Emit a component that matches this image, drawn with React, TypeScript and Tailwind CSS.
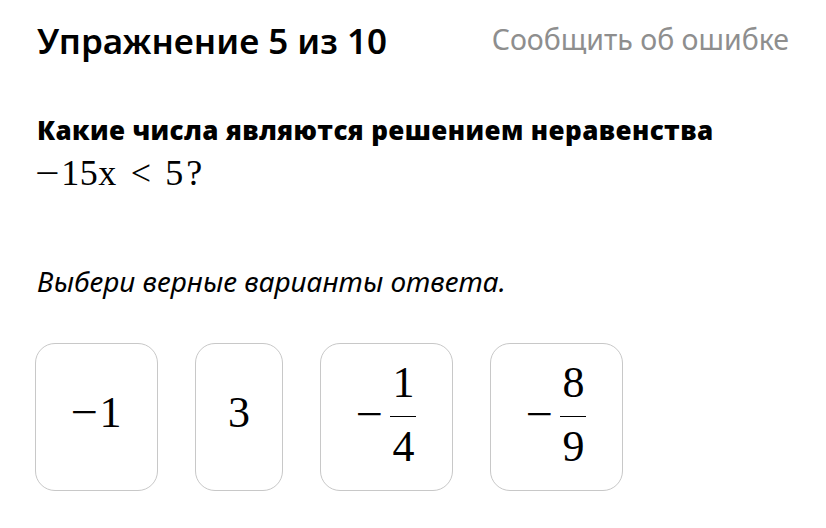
import React from "react";

const serif = { fontFamily: '"Liberation Serif", "DejaVu Serif", serif' };

function Frac({ n, d }: { n: string; d: string }) {
  return (
    <span className="inline-flex flex-col items-center leading-none">
      <span className="px-[2px] pb-[11px]">{n}</span>
      <span className="h-[1.5px] w-full bg-black" />
      <span className="px-[2px] pt-[8px]">{d}</span>
    </span>
  );
}

export default function App() {
  return (
    <div className="w-[826px] h-[528px] bg-white text-black px-[37px] pt-[17px]" style={{ fontFamily: '"Noto Sans", "Open Sans", sans-serif' }}>
      <div className="flex items-start justify-between">
        <div className="text-[35px] leading-[48px] font-semibold">Упражнение 5 из 10</div>
        <div className="text-[28.5px] leading-[48px] text-[#8e8e8e] mt-[-2px]">Сообщить об ошибке</div>
      </div>
      <div className="mt-[49px] text-[26px] font-extrabold leading-[32px] tracking-[0.4px]" style={{ fontFamily: '"Open Sans", "Noto Sans", sans-serif' }}>
        Какие числа являются решением неравенства
      </div>
      <div className="mt-[7px] text-[36px] leading-[40px] flex items-baseline" style={serif}>
        <span className="mr-[4px] scale-x-[1.2] inline-block">−</span>
        <span className="tracking-[0.5px]">15x</span>
        <span className="ml-[14px] mr-[14px]">&lt;</span>
        <span className="tracking-[3px]">5?</span>
      </div>
      <div className="mt-[70px] text-[28px] italic leading-[36px]">Выбери верные варианты ответа.</div>
      <div className="mt-[44px] ml-[-2px] flex gap-[37px] text-[44px]" style={serif}>
        <div className="h-[148px] w-[123px] rounded-[20px] border-[1.5px] border-[#c8c8c8] flex items-center justify-center pb-[8px]">
          <span className="leading-none inline-block scale-x-[1.1] mr-[3px]">−</span>
          <span className="leading-none">1</span>
        </div>
        <div className="h-[148px] w-[88px] rounded-[20px] border-[1.5px] border-[#c8c8c8] flex items-center justify-center pb-[8px]">
          <span className="leading-none">3</span>
        </div>
        <div className="h-[148px] w-[133px] rounded-[20px] border-[1.5px] border-[#c8c8c8] flex items-center justify-center pb-[4px]">
          <span className="leading-none mr-[9px] inline-block scale-x-[1.1]">−</span>
          <Frac n="1" d="4" />
        </div>
        <div className="h-[148px] w-[133px] rounded-[20px] border-[1.5px] border-[#c8c8c8] flex items-center justify-center pb-[4px]">
          <span className="leading-none mr-[9px] inline-block scale-x-[1.1]">−</span>
          <Frac n="8" d="9" />
        </div>
      </div>
    </div>
  );
}
